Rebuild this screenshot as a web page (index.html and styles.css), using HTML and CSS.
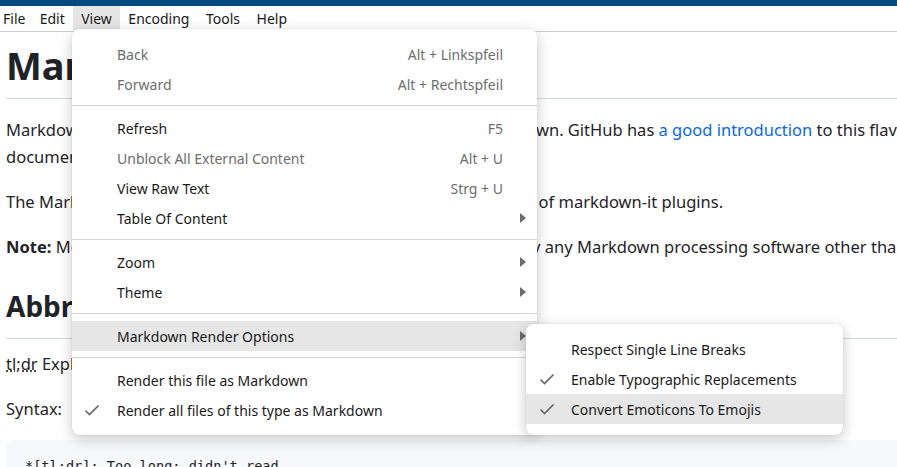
FILE: index.html
```html
<!DOCTYPE html>
<html lang="en">
<head>
<meta charset="utf-8">
<title>Markdown Viewer</title>
<link rel="stylesheet" href="styles.css">
</head>
<body>
<div class="app">
  <div class="topbar"></div>
  <nav class="menubar">
    <span class="mb-item first">File</span>
    <span class="mb-item">Edit</span>
    <span class="mb-item active">View</span>
    <span class="mb-item">Encoding</span>
    <span class="mb-item">Tools</span>
    <span class="mb-item">Help</span>
  </nav>
  <main class="doc">
    <h1 class="h1">Markdown Syntax</h1>
    <p class="para">Markdown files are rendered with the CommonMark spec of Markdown. GitHub has <a class="link">a good introduction</a> to this flavour of Markdown in their documentation for writing on the platform.</p>
    <p class="para">The Markdown parser used is markdown-it together with a selection of markdown-it plugins.</p>
    <p class="para"><strong>Note:</strong> Most of the extensions listed below might not be supported by any Markdown processing software other than this one.</p>
    <h2 class="h2">Abbreviations</h2>
    <p class="para"><abbr class="abbr">tl;dr</abbr> Explains an abbreviation.</p>
    <p class="para">Syntax:</p>
    <pre class="code">*[tl;dr]: Too long; didn't read</pre>
  </main>

  <div class="menu dropdown">
    <div class="item disabled"><span class="chk"></span><span class="label">Back</span><span class="sc">Alt + Linkspfeil</span><span class="arr"></span></div>
    <div class="item disabled"><span class="chk"></span><span class="label">Forward</span><span class="sc">Alt + Rechtspfeil</span><span class="arr"></span></div>
    <div class="sep"></div>
    <div class="item"><span class="chk"></span><span class="label">Refresh</span><span class="sc">F5</span><span class="arr"></span></div>
    <div class="item disabled"><span class="chk"></span><span class="label">Unblock All External Content</span><span class="sc">Alt + U</span><span class="arr"></span></div>
    <div class="item"><span class="chk"></span><span class="label">View Raw Text</span><span class="sc">Strg + U</span><span class="arr"></span></div>
    <div class="item"><span class="chk"></span><span class="label">Table Of Content</span><span class="sc"></span><span class="arr"><i class="tri"></i></span></div>
    <div class="sep"></div>
    <div class="item"><span class="chk"></span><span class="label">Zoom</span><span class="sc"></span><span class="arr"><i class="tri"></i></span></div>
    <div class="item"><span class="chk"></span><span class="label">Theme</span><span class="sc"></span><span class="arr"><i class="tri"></i></span></div>
    <div class="sep"></div>
    <div class="item hover"><span class="chk"></span><span class="label">Markdown Render Options</span><span class="sc"></span><span class="arr"><i class="tri"></i></span></div>
    <div class="sep"></div>
    <div class="item"><span class="chk"></span><span class="label">Render this file as Markdown</span><span class="sc"></span><span class="arr"></span></div>
    <div class="item"><span class="chk"><svg class="check" width="16" height="13" viewBox="0 0 16 13"><path d="M1.5 6.5 L5.5 10.5 L14.5 1.5" fill="none" stroke="#666" stroke-width="1.6"/></svg></span><span class="label">Render all files of this type as Markdown</span><span class="sc"></span><span class="arr"></span></div>
  </div>

  <div class="menu submenu">
    <div class="item"><span class="chk"></span><span class="label">Respect Single Line Breaks</span><span class="sc"></span><span class="arr"></span></div>
    <div class="item"><span class="chk"><svg class="check" width="16" height="13" viewBox="0 0 16 13"><path d="M1.5 6.5 L5.5 10.5 L14.5 1.5" fill="none" stroke="#666" stroke-width="1.6"/></svg></span><span class="label">Enable Typographic Replacements</span><span class="sc"></span><span class="arr"></span></div>
    <div class="item hover"><span class="chk"><svg class="check" width="16" height="13" viewBox="0 0 16 13"><path d="M1.5 6.5 L5.5 10.5 L14.5 1.5" fill="none" stroke="#666" stroke-width="1.6"/></svg></span><span class="label">Convert Emoticons To Emojis</span><span class="sc"></span><span class="arr"></span></div>
  </div>
</div>
</body>
</html>
```

FILE: styles.css
```css
html, body {
  margin: 0;
  padding: 0;
  width: 897px;
  height: 467px;
  overflow: hidden;
  background: #ffffff;
}

.app {
  position: relative;
  width: 897px;
  height: 467px;
  overflow: hidden;
  font-family: "Noto Sans", "Open Sans", sans-serif;
}

.topbar {
  height: 6px;
  background: #014a80;
}

.menubar {
  display: flex;
  height: 25px;
  border-bottom: 1px solid #cbcbcb;
  font-size: 14px;
  color: #1a1a1a;
}

.mb-item {
  display: flex;
  align-items: center;
  height: 24px;
  padding: 0 8.25px;
}

.mb-item.first {
  padding-left: 3px;
  padding-right: 6px;
}

.mb-item.active {
  background: #e5e5e5;
}

.doc {
  width: 1130px;
  padding: 0 6px;
  color: #1f2328;
  font-size: 16.5px;
  line-height: 27px;
}

.h1 {
  margin: 10px 0 17px;
  padding-bottom: 9px;
  font-size: 38px;
  line-height: 47px;
  font-weight: 700;
  border-bottom: 1px solid #d1d9e0;
}

.h2 {
  margin: 29px 0 11px;
  padding-bottom: 14px;
  font-size: 28px;
  line-height: 35px;
  font-weight: 700;
  border-bottom: 1px solid #d1d9e0;
}

.para {
  margin: 0 0 18px;
}

.link {
  color: #0969da;
}

.abbr {
  text-decoration: underline dotted;
}

.code {
  margin: 0;
  padding: 16px 19px;
  background: #f6f8fa;
  border-radius: 6px;
  font-family: "DejaVu Sans Mono", monospace;
  font-size: 13.6px;
  line-height: 20px;
  color: #1f2328;
}

.menu {
  position: absolute;
  background: #ffffff;
  border-radius: 8px;
  box-shadow: 0 4px 14px rgba(0, 0, 0, 0.22), 0 0 2px rgba(0, 0, 0, 0.08);
  font-size: 14px;
  color: #1a1a1a;
}

.dropdown {
  left: 72px;
  top: 29px;
  width: 465px;
  padding: 10px 0;
}

.submenu {
  left: 526px;
  top: 324px;
  width: 317px;
  padding: 10px 0 11px;
}

.item {
  display: grid;
  grid-template-columns: 45px 1fr auto 34px;
  align-items: center;
  height: 30px;
}

.item.hover {
  background: #e6e6e6;
}

.item.disabled .label {
  color: #6d6d6d;
}

.sc {
  color: #6d6d6d;
}

.chk {
  display: flex;
  align-items: center;
  padding-left: 12px;
}

.submenu .chk {
  padding-left: 13px;
}

.arr {
  display: flex;
  justify-content: flex-end;
  padding-right: 11px;
}

.tri {
  width: 0;
  height: 0;
  border-left: 6px solid #6b6b6b;
  border-top: 5px solid transparent;
  border-bottom: 5px solid transparent;
}

.sep {
  margin: 6px 0 7px;
  border-top: 1px solid #d6d6d6;
}
```
